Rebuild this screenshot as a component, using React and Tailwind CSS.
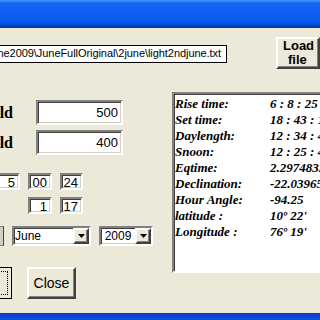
import React from "react";

const sunken =
  "bg-white border-2 border-t-[#808080] border-l-[#808080] border-b-white border-r-white shadow-[inset_1px_1px_0_#404040,inset_-1px_-1px_0_#d4d0c8]";
const raised =
  "bg-[#ece9d8] border-2 border-t-white border-l-white border-b-[#404040] border-r-[#404040] shadow-[inset_-1px_-1px_0_#808080]";

function Field({ value, className = "" }) {
  return (
    <div className={`${sunken} flex justify-end items-start pr-[3px] pt-[1px] text-[13px] leading-[14px] ${className}`}>
      {value}
    </div>
  );
}

function Select({ value, className = "", align = "left" }) {
  return (
    <div className={`${sunken} flex items-stretch ${className}`}>
      <div className={`flex-1 flex items-center text-[12px] ${align === "left" ? "pl-[1px]" : "justify-center"}`}>
        {value}
      </div>
      <div className={`${raised} w-[16px] flex items-center justify-center`}>
        <svg width="7" height="4" viewBox="0 0 7 4">
          <path d="M0 0h7L3.5 4z" fill="#000" />
        </svg>
      </div>
    </div>
  );
}

const results = [
  ["Rise time:", "6 : 8 : 25"],
  ["Set time:", "18 : 43 : 11"],
  ["Daylength:", "12 : 34 : 46"],
  ["Snoon:", "12 : 25 : 48"],
  ["Eqtime:", "2.2974833"],
  ["Declination:", "-22.039651"],
  ["Hour Angle:", "-94.25"],
  ["latitude :", "10º 22'"],
  ["Longitude :", "76º 19'"],
];

export default function App() {
  return (
    <div
      className="w-[320px] h-[320px] overflow-hidden bg-[#ece9d8] flex flex-col text-black"
      style={{ fontFamily: '"Liberation Sans", Arial, sans-serif' }}
    >
      {/* title bar */}
      <div className="h-[28px] shrink-0 bg-[linear-gradient(to_bottom,#4a9bff_0px,#1566f4_3px,#0a5cf0_20px,#0350e0_24px,#0a2f9a_28px)]" />

      <div className="flex-1 flex flex-col">
        {/* path row */}
        <div className="flex items-center pt-[9px]">
          <div className="-ml-[66px] w-[300px] h-[18px] mt-[1px] bg-white border border-black flex items-center justify-end pr-[5px] text-[11px] tracking-[-0.06px] whitespace-nowrap overflow-hidden">
            \Data\June2009\JuneFullOriginal\2june\light2ndjune.txt
          </div>
          <button className={`${raised} ml-[49px] w-[44px] h-[32px] shrink-0 flex flex-col items-start pl-[5px] justify-center font-bold text-[13px] leading-[14px]`}>
            <span>Load</span>
            <span className="pl-[5px]">file</span>
          </button>
        </div>

        <div className="flex mt-[23px]">
          {/* left controls */}
          <div className="w-[172px] shrink-0 flex flex-col pt-[8px]">
            {["500", "400"].map((v, i) => (
              <div key={v} className={`flex items-center h-[25px] ${i ? "mt-[5px]" : ""}`}>
                <div className="w-[36px] shrink-0 flex justify-end pr-[23px] whitespace-nowrap font-bold text-[16px]" style={{ fontFamily: '"Liberation Serif", serif' }}>
                  Threshold
                </div>
                <Field value={v} className="w-[87px] h-[25px] pt-[4px]" />
              </div>
            ))}

            <div className="flex gap-[8px] mt-[18px] -ml-[4px]">
              <Field value="5" className="w-[24px] h-[17px]" />
              <Field value="00" className="w-[24px] h-[17px]" />
              <Field value="24" className="w-[23px] h-[17px]" />
            </div>
            <div className="flex gap-[8px] mt-[7px] pl-[28px]">
              <Field value="1" className="w-[24px] h-[17px]" />
              <Field value="17" className="w-[23px] h-[17px]" />
            </div>

            <div className="flex items-center mt-[12px] h-[20px]">
              <div className="w-[4px] h-[20px] bg-[#d4d0c8] border-r border-r-[#404040] border-y border-y-[#808080]" />
              <Select value="June" className="ml-[8px] w-[79px] h-[20px]" />
              <Select value="2009" align="center" className="ml-[8px] w-[54px] h-[20px]" />
            </div>

            <div className="flex mt-[21px]">
              <div className="-ml-[28px] w-[40px] h-[32px] border border-black p-[3px]">
                <div className="w-full h-full border border-dotted border-black" />
              </div>
              <button className={`${raised} ml-[15px] w-[49px] h-[32px] text-[14px] flex items-center justify-center`}>
                Close
              </button>
            </div>
          </div>

          {/* results panel */}
          <div
            className="w-[160px] h-[181px] shrink-0 bg-white border-2 border-t-[#808080] border-l-[#808080] border-b-white border-r-white shadow-[inset_1px_1px_0_#404040] pt-[2px] pl-[1px] font-bold italic text-[13px] leading-[16px] whitespace-nowrap"
            style={{ fontFamily: '"Liberation Serif", "Times New Roman", serif' }}
          >
            {results.map(([k, v]) => (
              <div key={k} className="flex">
                <span className="w-[95px] shrink-0">{k}</span>
                <span>{v}</span>
              </div>
            ))}
          </div>
        </div>
      </div>

      {/* bottom bar */}
      <div className="h-[7px] shrink-0 bg-[linear-gradient(to_bottom,#1b3f9e_0px,#0a3fcf_2px,#0b52e6_7px)]" />
    </div>
  );
}
